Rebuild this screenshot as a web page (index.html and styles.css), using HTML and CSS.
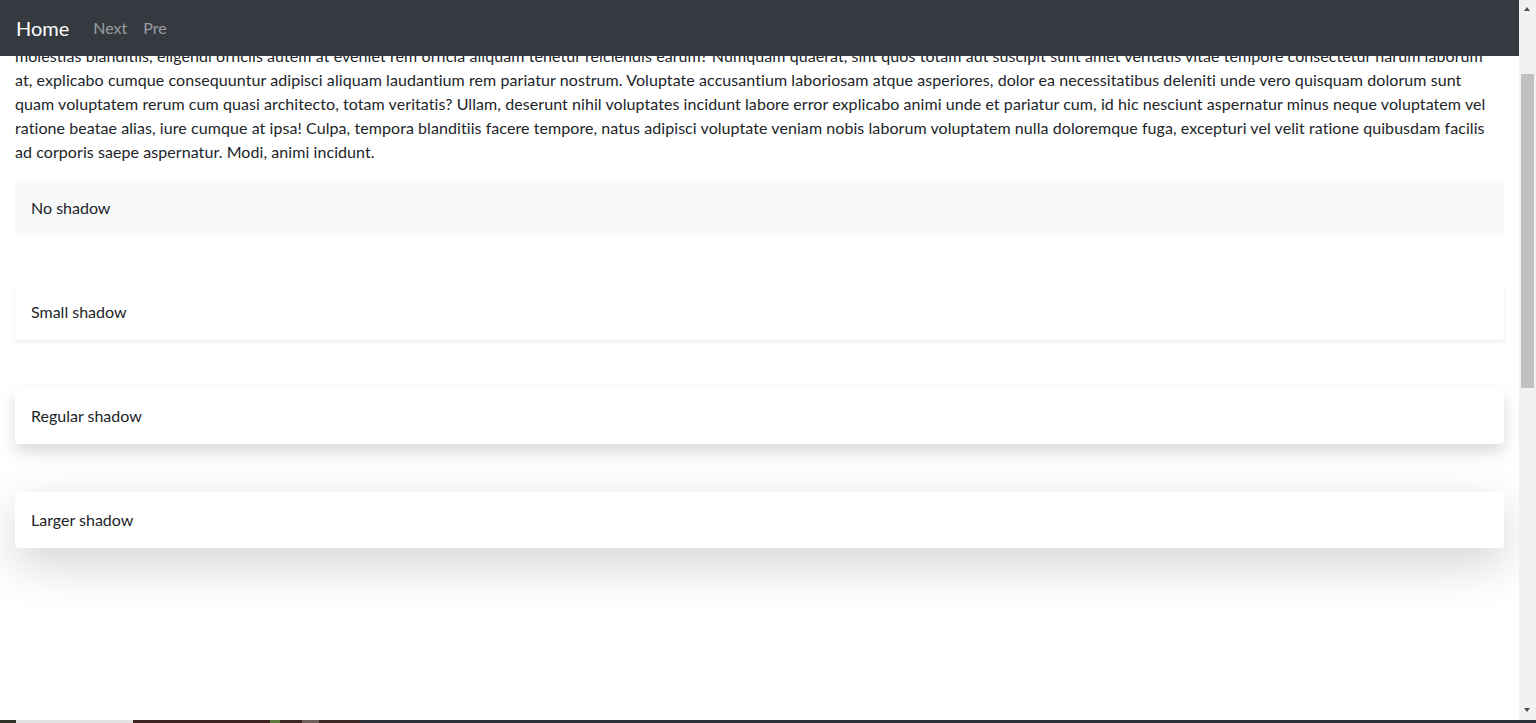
FILE: index.html
```html
<!DOCTYPE html>
<html lang="en">
<head>
<meta charset="utf-8">
<title>Shadows</title>
<link rel="stylesheet" href="styles.css">
</head>
<body>
<nav class="navbar">
  <a class="brand" href="#">Home</a>
  <ul class="nav">
    <li><a class="nav-link" href="#">Next</a></li>
    <li><a class="nav-link" href="#">Pre</a></li>
  </ul>
</nav>
<main class="container">
  <p class="lead-text">Lorem ipsum dolor sit amet consectetur adipisicing elit. Quae, voluptatibus eius! Assumenda dolores ullam, tempore quaerat nemo odit facilis repellat laboriosam, ab culpa ipsam sequi eligendi<br>
  excepturi quibusdam nulla iste voluptatum minima perferendis? Aspernatur, omnis deleniti. Quia numquam cupiditate dignissimos corrupti tempora facere expedita itaque, nisi iure necessitatibus possimus<br>
  quos dolorum eveniet magnam, sapiente accusamus architecto provident. Officiis ratione delectus doloribus repudiandae, consequatur sint eaque animi assumenda explicabo fugit rerum nesciunt, ducimus sed<br>
  voluptas odio quidem impedit unde, perspiciatis alias! Doloremque, nostrum perferendis. Iusto, minus nam similique placeat ipsum obcaecati esse accusantium soluta quod debitis numquam enim vitae libero<br>
  atque ea magni aut quae harum modi quas cum dolore fugiat? Velit tenetur distinctio laudantium nesciunt dicta, exercitationem officia cumque inventore pariatur totam reprehenderit adipisci voluptatibus<br>
  hic omnis repellendus, error expedita ipsa aliquid molestiae temporibus illum porro esse fuga quasi ullam dolor labore eos recusandae similique iusto asperiores commodi mollitia vero provident<br>
  natus, ex earum incidunt sunt voluptates minus reiciendis dolores enim eum impedit fugit rem nobis veniam. Illum sequi quisquam officiis, consequuntur ratione quis iste nihil tempora voluptas<br>
  molestias blanditiis, eligendi officiis autem at eveniet rem officia aliquam tenetur reiciendis earum? Numquam quaerat, sint quos totam aut suscipit sunt amet veritatis vitae tempore consectetur harum laborum<br>
  at, explicabo cumque consequuntur adipisci aliquam laudantium rem pariatur nostrum. Voluptate accusantium laboriosam atque asperiores, dolor ea necessitatibus deleniti unde vero quisquam dolorum sunt<br>
  quam voluptatem rerum cum quasi architecto, totam veritatis? Ullam, deserunt nihil voluptates incidunt labore error explicabo animi unde et pariatur cum, id hic nesciunt aspernatur minus neque voluptatem vel<br>
  ratione beatae alias, iure cumque at ipsa! Culpa, tempora blanditiis facere tempore, natus adipisci voluptate veniam nobis laborum voluptatem nulla doloremque fuga, excepturi vel velit ratione quibusdam facilis<br>
  ad corporis saepe aspernatur. Modi, animi incidunt.</p>
  <div class="box box-none" id="first-box">No shadow</div>
  <div class="box box-sm">Small shadow</div>
  <div class="box box-md">Regular shadow</div>
  <div class="box box-lg">Larger shadow</div>
</main>
<div class="scrollbar" aria-hidden="true">
  <span class="sb-arrow sb-up"></span>
  <span class="sb-thumb"></span>
  <span class="sb-arrow sb-down"></span>
</div>
<div class="taskbar-edge"></div>
<script src="script.js"></script>
</body>
</html>
```

FILE: styles.css
```css
html, body {
  margin: 0;
  padding: 0;
}

body {
  font-family: Lato, "Segoe UI", "Liberation Sans", sans-serif;
  font-size: 16px;
  line-height: 24px;
  color: #212529;
  background: #fff;
}

.navbar {
  position: fixed;
  top: 0;
  left: 0;
  right: 17px;
  z-index: 10;
  height: 56px;
  box-sizing: border-box;
  padding: 8px 16px;
  display: flex;
  align-items: center;
  background: #343a40;
}

.brand {
  color: #fff;
  font-size: 20px;
  line-height: 30px;
  text-decoration: none;
  margin-right: 16px;
  padding: 5px 0;
}

.nav {
  list-style: none;
  margin: 0;
  padding: 0;
  display: flex;
}

.nav-link {
  display: block;
  padding: 8px;
  color: rgba(255, 255, 255, 0.5);
  text-decoration: none;
}

.container {
  padding: 0 32px 861px 15px;
}

.lead-text {
  margin: 0 0 16px;
  white-space: nowrap;
  letter-spacing: 0.07px;
}

.box {
  padding: 16px;
  margin-bottom: 48px;
  border-radius: 4px;
  background: #fff;
}

.box-none {
  background: #f8f9fa;
}

.box-sm {
  box-shadow: 0 2px 4px rgba(0, 0, 0, 0.075);
}

.box-md {
  box-shadow: 0 8px 16px rgba(0, 0, 0, 0.15);
}

.box-lg {
  box-shadow: 0 16px 48px rgba(0, 0, 0, 0.175);
}

/* drawn window scrollbar */
.scrollbar {
  position: fixed;
  top: 0;
  right: 0;
  bottom: 0;
  width: 17px;
  z-index: 15;
  background: #f1f1f1;
}

.sb-thumb {
  position: absolute;
  left: 2px;
  right: 2px;
  top: 74px;
  height: 314px;
  background: #c1c1c1;
}

.sb-arrow {
  position: absolute;
  left: 5px;
  width: 0;
  height: 0;
  border-left: 3.5px solid transparent;
  border-right: 3.5px solid transparent;
}

.sb-up {
  top: 7px;
  border-bottom: 4px solid #505050;
}

.sb-down {
  bottom: 11px;
  border-top: 4px solid #505050;
}

.taskbar-edge {
  position: fixed;
  left: 0;
  right: 0;
  bottom: 0;
  height: 3px;
  z-index: 20;
  background: linear-gradient(to right,
    #2e3326 0, #2e3326 16px,
    #e2e2e2 16px, #e2e2e2 133px,
    #3d2323 133px, #3d2323 270px,
    #5b7a3c 270px, #5b7a3c 280px,
    #3d2626 280px, #3d2626 302px,
    #6e615c 302px, #6e615c 319px,
    #3d2626 319px, #3d2626 360px,
    #2c3139 360px, #2c3139 100%);
}
```

FILE: script.js
```js
(function () {
  var box = document.getElementById('first-box');
  var target = box.offsetTop - 180;
  window.scrollTo(0, target);
  window.addEventListener('load', function () {
    window.scrollTo(0, target);
  });
})();
```
